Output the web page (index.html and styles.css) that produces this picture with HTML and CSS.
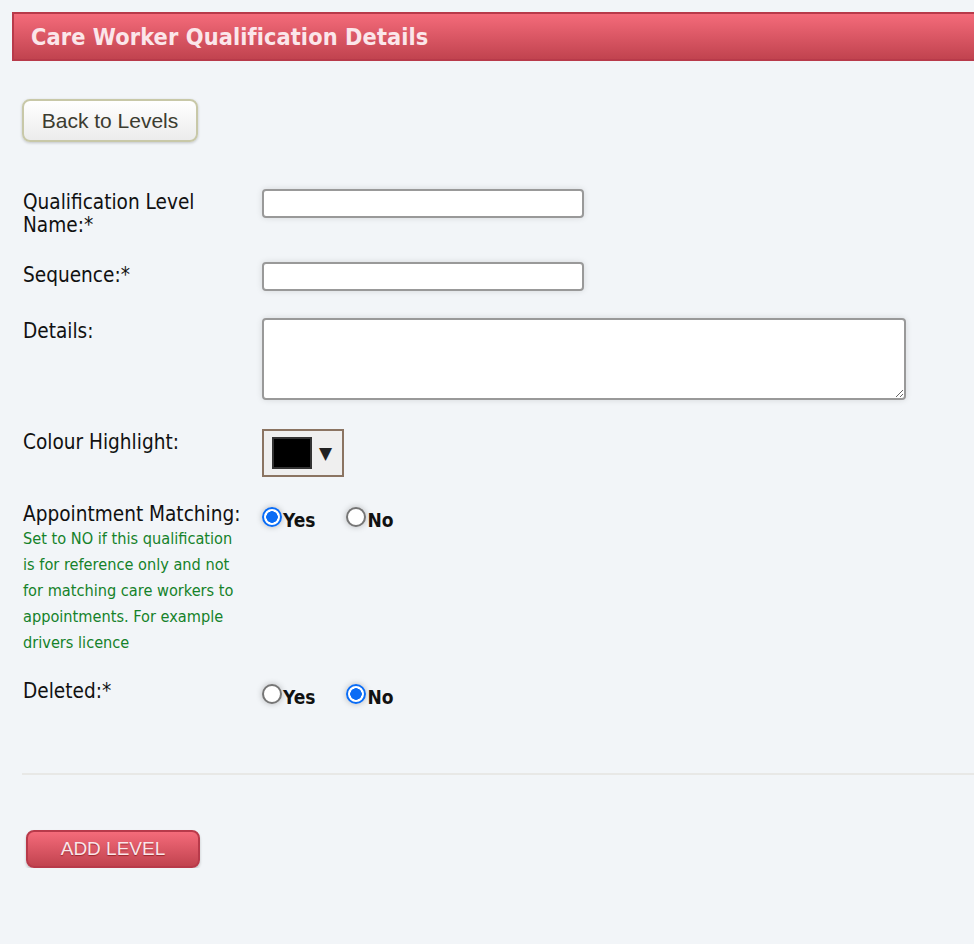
FILE: index.html
```html
<!DOCTYPE html>
<html>
<head>
<meta charset="utf-8">
<link rel="stylesheet" href="styles.css">
</head>
<body>
<div class="header"><h1>Care Worker Qualification Details</h1></div>
<div class="content">
  <button class="back-btn">Back to Levels</button>
  <form class="form">
    <div class="row row-name">
      <label class="label">Qualification Level Name:*</label>
      <div class="field"><input class="text-input" type="text"></div>
    </div>
    <div class="row row-seq">
      <label class="label">Sequence:*</label>
      <div class="field"><input class="text-input" type="text"></div>
    </div>
    <div class="row row-details">
      <label class="label">Details:</label>
      <div class="field"><textarea class="textarea"></textarea></div>
    </div>
    <div class="row row-colour">
      <label class="label">Colour Highlight:</label>
      <div class="field">
        <div class="colour-picker"><span class="swatch"></span><span class="arrow">▼</span></div>
      </div>
    </div>
    <div class="row row-appt">
      <div class="label label-wide">
        <div>Appointment Matching:</div>
        <div class="help">Set to NO if this qualification is for reference only and not for matching care workers to appointments. For example drivers licence</div>
      </div>
      <div class="field radios">
        <label class="radio-opt"><span class="radio checked"></span>Yes</label>
        <label class="radio-opt"><span class="radio"></span>No</label>
      </div>
    </div>
    <div class="row row-deleted">
      <label class="label">Deleted:*</label>
      <div class="field radios">
        <label class="radio-opt"><span class="radio"></span>Yes</label>
        <label class="radio-opt"><span class="radio checked"></span>No</label>
      </div>
    </div>
  </form>
  <hr class="divider">
  <button class="add-btn">ADD LEVEL</button>
</div>
</body>
</html>
```
FILE: styles.css
```css
html, body {
  margin: 0;
  padding: 0;
  background: #f2f5f8;
}
body {
  font-family: "DejaVu Sans Condensed", "DejaVu Sans", sans-serif;
  color: #111;
  width: 974px;
  overflow: hidden;
}
.header {
  margin: 12px 0 0 12px;
  border: 2px solid #b83a4a;
  border-right: none;
  background: linear-gradient(#f46b7a, #c1434f);
  height: 45px;
  display: flex;
  align-items: center;
  padding-left: 17px;
}
.header h1 {
  margin: 0;
  font-size: 23.3px;
  font-weight: bold;
  color: #fbe6ea;
  letter-spacing: 0.1px;
}
.content {
  padding-left: 22px;
}
.back-btn {
  margin-top: 38px;
  width: 176px;
  height: 43px;
  border: 2px solid #c8c8a8;
  border-radius: 8px;
  background: linear-gradient(#ffffff, #ececec);
  box-shadow: 0 1px 3px rgba(0,0,0,0.2);
  font-family: "Liberation Sans", Arial, sans-serif;
  font-size: 21px;
  color: #3c3c30;
  padding: 0;
}
.form {
  margin-top: 47px;
}
.row {
  display: grid;
  grid-template-columns: 240px 1fr;
  font-size: 20.6px;
  line-height: 23px;
}
.label {
  padding-left: 1px;
  padding-right: 20px;
}
.label-wide {
  padding-right: 0;
  white-space: nowrap;
}
.row-name { margin-bottom: 25px; }
.row-name .label { padding-top: 2px; }
.row-seq { margin-bottom: 27px; }
.row-seq .label { padding-top: 2px; }
.row-details { margin-bottom: 29px; }
.row-details .label { padding-top: 2px; }
.row-colour { margin-bottom: 26px; }
.row-colour .label { padding-top: 2px; }
.row-appt { margin-bottom: 24px; }
.text-input {
  display: block;
  box-sizing: border-box;
  width: 322px;
  height: 29px;
  border: 2px solid #999;
  border-radius: 4px;
  background: #fff;
  box-shadow: 0 0 6px rgba(0,0,0,0.12);
  margin: 0;
}
.textarea {
  display: block;
  box-sizing: border-box;
  width: 644px;
  height: 82px;
  border: 2px solid #999;
  border-radius: 4px;
  background: #fff;
  box-shadow: 0 0 6px rgba(0,0,0,0.12);
  margin: 0;
  resize: both;
}
.colour-picker {
  box-sizing: border-box;
  width: 82px;
  height: 48px;
  border: 2px solid #8b7462;
  background: #efefef;
  display: flex;
  align-items: center;
  padding-left: 8px;
  gap: 7px;
}
.swatch {
  width: 40px;
  height: 32px;
  box-sizing: border-box;
  background: #000;
  border: 2px solid #333;
}
.arrow {
  font-size: 17px;
  color: #222;
  font-family: "DejaVu Sans", sans-serif;
}
.help {
  color: #15822a;
  font-size: 16.2px;
  line-height: 26px;
  white-space: normal;
  max-width: 212px;
}
.radios {
  display: flex;
  gap: 31px;
  padding-top: 4px;
  align-items: flex-start;
}
.radio-opt {
  display: flex;
  align-items: flex-end;
  font-weight: bold;
  font-size: 19px;
  line-height: 24px;
}
.radio {
  box-sizing: border-box;
  width: 20px;
  height: 20px;
  border-radius: 50%;
  border: 2px solid #767676;
  background: #fff;
  box-shadow: 0 0 6px rgba(0,0,0,0.25);
  margin-right: 1px;
  margin-bottom: 5px;
}
.radio.checked {
  border: 2px solid #0a6cf5;
  background: radial-gradient(circle, #0a6cf5 0 5.5px, #fff 6px);
}
.divider {
  margin: 64px 0 0 0;
  border: none;
  border-top: 2px solid #e8e8e6;
  height: 0;
}
.add-btn {
  margin-top: 55px;
  margin-left: 4px;
  width: 174px;
  height: 38px;
  border: 2px solid #b83a4a;
  border-radius: 8px;
  background: linear-gradient(#f46b7a, #c1434f);
  box-shadow: 0 2px 3px rgba(0,0,0,0.2);
  font-family: "Liberation Sans", Arial, sans-serif;
  font-size: 19px;
  color: #fbe6ea;
  text-shadow: 0 1px 1px rgba(100,0,0,0.5);
  padding: 0;
}
```
